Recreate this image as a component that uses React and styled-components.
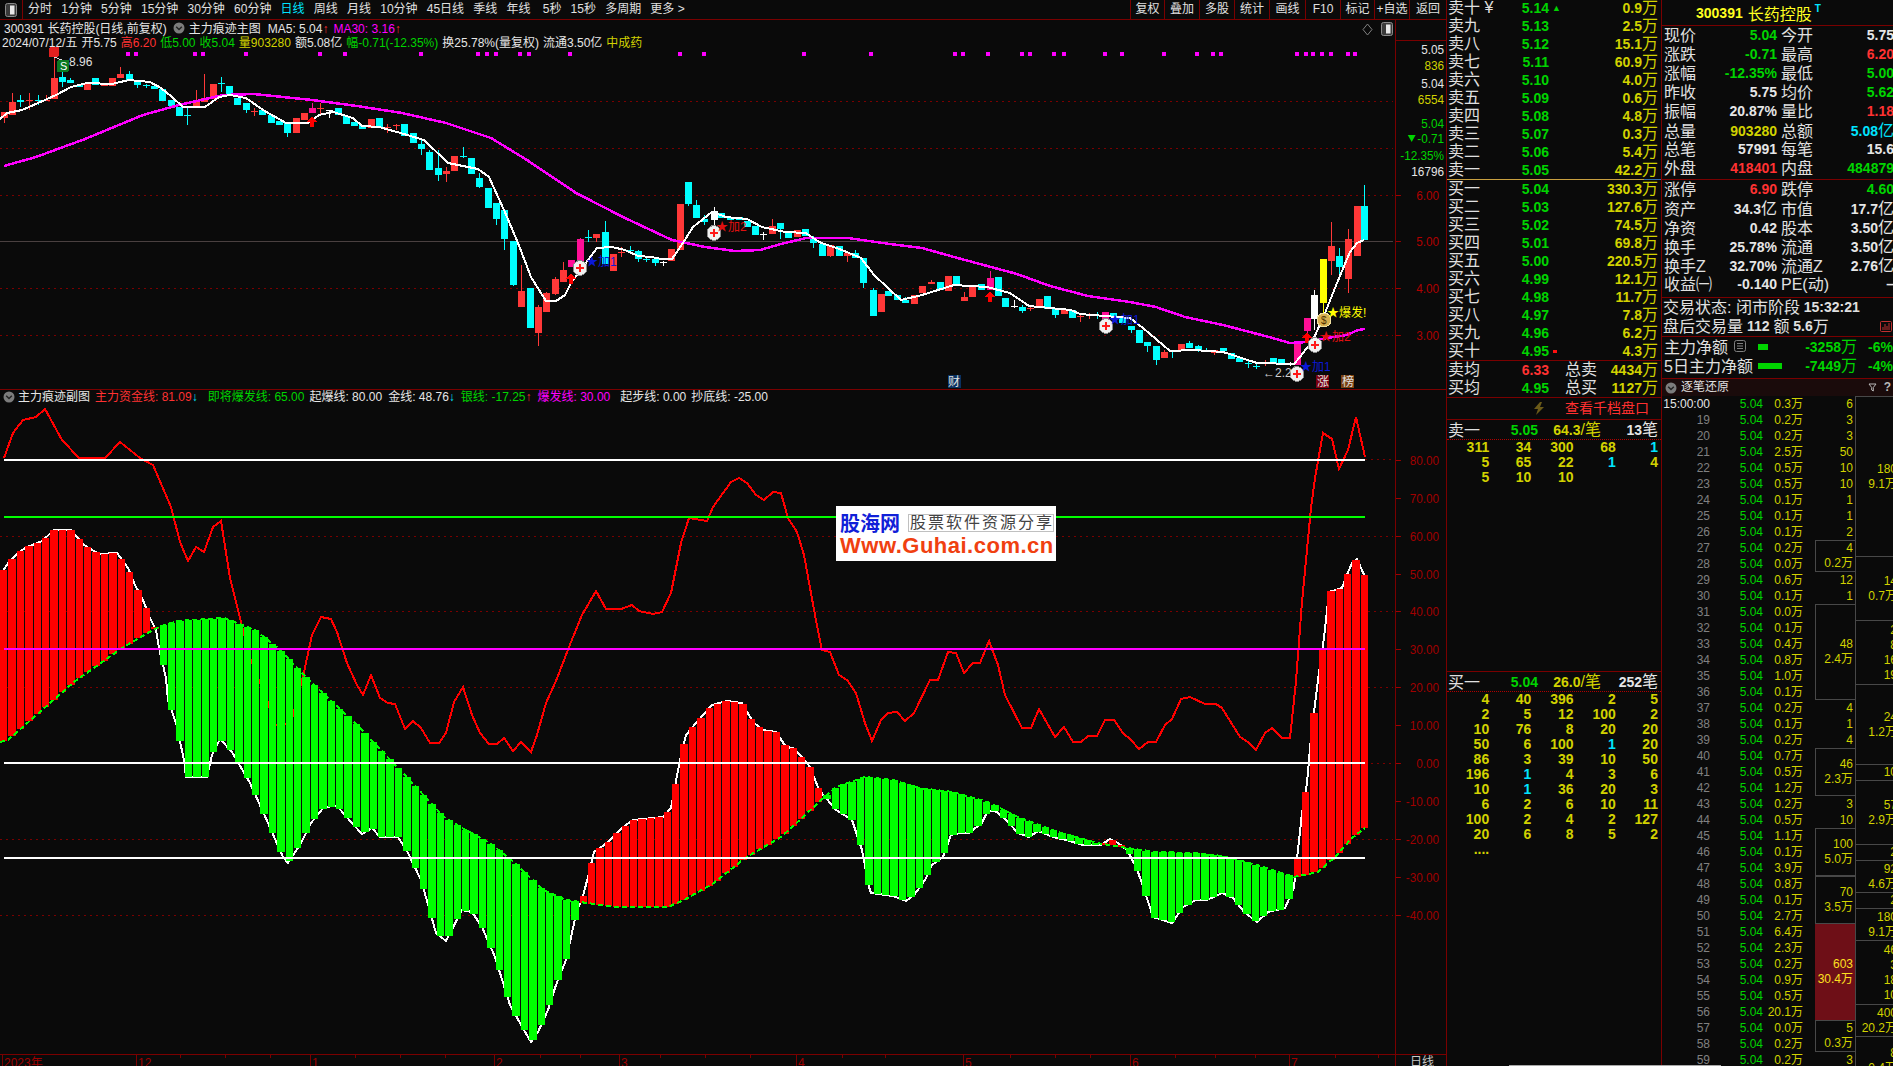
import React from "react";
import styled, { createGlobalStyle } from "styled-components";

const FONT = `"Liberation Sans", "Noto Sans CJK SC", sans-serif`;
const LINE = "#7a0000";
const C = {
	r: "#ff3232",
	g: "#00d400",
	w: "#e6e6e6",
	y: "#d2d200",
	c: "#00e4ff",
	m: "#ff00ff",
	s: "#808080",
};

/* ---------- chart data, page pixel coordinates ---------- */
const CANDLE_COLORS = { r: "#ff3838", c: "#00ffff", m: "#ff0f96", w: "#ffffff", y: "#ffff00" };
const CANDLES = [
	[4,112,118,112,123,"r"],[12,102,115,93,115,"r"],[20,100,102,95,107,"c"],[29,100,101,93,110,"r"],[38,100,101,95,105,"c"],
	[46,100,101,95,100,"r"],[54,78,99,53,99,"r"],[62,77,82,72,87,"c"],[70,80,83,78,83,"c"],[79,85,87,85,87,"c"],
	[87,84,90,84,90,"r"],[95,78,85,78,85,"c"],[104,83,86,83,86,"r"],[112,78,86,78,86,"r"],[120,74,78,67,78,"r"],
	[129,74,81,71,81,"c"],[137,81,85,81,88,"c"],[146,85,86,84,88,"c"],[154,86,89,84,89,"c"],[162,89,101,89,101,"c"],
	[171,100,106,100,106,"c"],[179,107,116,107,116,"c"],[187,115,116,107,125,"c"],[196,100,107,90,107,"r"],[204,98,102,74,102,"r"],
	[213,84,99,84,99,"r"],[221,83,84,77,92,"c"],[229,86,95,86,95,"c"],[237,98,105,98,105,"c"],[246,103,110,103,113,"c"],
	[254,111,112,108,116,"r"],[262,110,115,110,115,"c"],[271,115,123,115,123,"c"],[279,121,125,121,125,"c"],[287,123,133,123,137,"c"],
	[296,118,133,118,133,"r"],[304,113,120,113,120,"r"],[312,108,113,103,113,"m"],[320,108,109,103,116,"r"],[329,110,111,110,118,"w"],
	[338,108,115,108,115,"c"],[346,116,124,116,124,"c"],[354,122,126,122,126,"c"],[362,125,129,125,129,"c"],[371,119,128,119,128,"r"],
	[379,118,128,118,128,"c"],[387,127,128,124,133,"r"],[396,125,126,124,130,"r"],[404,124,136,124,136,"c"],[413,133,143,133,143,"c"],
	[421,144,149,140,155,"c"],[429,152,170,150,170,"c"],[438,168,175,150,181,"c"],[446,171,174,167,182,"r"],[454,156,171,156,171,"r"],
	[463,156,157,147,158,"c"],[471,158,174,158,174,"c"],[479,178,187,173,188,"c"],[488,188,208,188,208,"c"],[496,203,219,203,225,"c"],
	[504,210,239,210,250,"c"],[513,241,285,241,286,"c"],[521,291,307,265,307,"r"],[530,288,328,288,328,"c"],[538,307,333,305,346,"r"],
	[546,293,312,292,312,"r"],[555,279,294,277,295,"r"],[563,270,282,262,282,"r"],[571,260,267,260,267,"m"],[580,239,263,238,263,"m"],
	[588,237,238,230,242,"c"],[596,234,238,234,242,"r"],[605,232,264,221,264,"c"],[613,254,271,254,271,"r"],[621,252,253,247,257,"r"],
	[630,250,251,246,254,"c"],[638,251,259,250,262,"c"],[646,259,260,256,262,"c"],[655,259,263,259,266,"c"],[663,262,263,261,266,"w"],
	[671,249,261,249,261,"r"],[680,204,250,204,250,"r"],[688,182,204,182,206,"c"],[696,205,218,200,218,"c"],[704,219,222,215,225,"c"],
	[714,211,220,207,226,"w"],[721,213,218,213,218,"c"],[730,217,220,217,220,"c"],[739,217,220,217,220,"c"],[747,221,227,221,227,"c"],
	[755,226,235,226,235,"c"],[763,234,235,232,240,"w"],[772,226,234,219,234,"r"],[780,223,229,223,239,"c"],[788,233,238,233,238,"c"],
	[797,230,237,230,237,"r"],[805,229,236,229,236,"c"],[813,238,243,236,248,"c"],[822,244,256,244,256,"c"],[830,245,256,245,257,"r"],
	[839,246,256,246,256,"c"],[847,253,256,253,262,"r"],[855,253,258,250,258,"c"],[863,258,283,258,288,"c"],[873,290,316,288,316,"c"],
	[881,294,312,294,312,"r"],[888,291,296,291,296,"c"],[897,295,300,295,300,"c"],[905,300,303,297,303,"c"],[914,295,304,295,304,"r"],
	[922,286,293,286,293,"r"],[931,282,284,280,284,"r"],[940,282,290,282,290,"c"],[948,276,291,276,291,"r"],[956,276,285,276,285,"c"],
	[964,297,301,292,301,"r"],[972,287,297,287,297,"r"],[981,284,290,284,290,"c"],[990,278,290,271,290,"m"],[998,277,296,277,296,"c"],
	[1005,298,307,298,307,"c"],[1014,306,307,300,308,"w"],[1022,307,311,305,313,"c"],[1030,308,309,306,311,"r"],[1039,299,306,299,306,"r"],
	[1047,296,309,296,309,"c"],[1055,309,315,309,318,"c"],[1064,310,314,310,314,"r"],[1072,310,318,310,318,"c"],[1080,316,317,313,322,"r"],
	[1089,315,316,313,319,"r"],[1097,315,316,312,319,"c"],[1105,312,319,312,319,"m"],[1113,313,317,313,319,"c"],[1122,317,323,317,323,"c"],
	[1131,326,330,326,333,"c"],[1139,330,343,330,343,"c"],[1147,342,346,342,352,"c"],[1156,346,360,346,365,"c"],[1164,352,358,350,358,"r"],
	[1172,350,352,350,358,"c"],[1181,344,351,344,351,"r"],[1189,343,348,341,348,"c"],[1198,346,350,345,352,"c"],[1206,350,352,348,352,"c"],
	[1214,350,353,350,355,"r"],[1223,348,351,348,351,"c"],[1231,353,359,353,359,"c"],[1239,358,362,358,362,"c"],[1248,363,364,361,368,"c"],
	[1256,366,367,364,369,"c"],[1265,362,363,360,366,"r"],[1273,358,363,358,363,"c"],[1281,359,365,359,365,"c"],[1290,364,365,362,366,"w"],
	[1297,343,365,343,365,"m"],[1307,318,331,318,337,"m"],[1314,295,319,290,330,"w"],[1323,259,303,259,320,"y"],[1331,246,261,222,275,"r"],
	[1339,256,267,248,277,"c"],[1348,239,279,229,293,"r"],[1357,206,256,206,256,"r"],[1364,206,240,185,240,"c"],
];
const MA5 = [[0,119],[7,113],[22,110],[45,100],[56,95],[71,87],[87,83],[112,84],[129,80],[150,82],[161,88],[172,97],[183,107],[205,107],[219,97],[230,95],[246,98],[263,110],[286,123],[308,123],[319,115],[333,112],[353,118],[362,126],[379,127],[397,132],[424,140],[448,163],[478,169],[489,177],[504,210],[518,243],[531,277],[546,301],[556,301],[565,295],[571,283],[597,248],[612,247],[625,250],[638,256],[652,257],[661,259],[672,259],[683,243],[693,227],[712,212],[726,217],[747,219],[762,227],[785,232],[806,233],[819,242],[842,250],[861,258],[874,275],[901,300],[922,295],[954,285],[987,287],[1010,293],[1029,306],[1071,310],[1080,314],[1105,316],[1130,318],[1143,328],[1170,351],[1193,350],[1223,352],[1257,363],[1294,364],[1300,357],[1313,340],[1325,313],[1337,283],[1350,252],[1357,243],[1364,240]];
const MA30 = [[4,166],[36,157],[85,139],[143,115],[179,105],[223,95],[254,94],[312,100],[357,106],[402,113],[446,123],[491,138],[527,160],[576,193],[625,218],[672,240],[705,247],[735,251],[760,250],[781,244],[806,238],[848,238],[890,244],[922,248],[954,257],[991,267],[1017,274],[1050,286],[1088,296],[1130,302],[1156,307],[1185,317],[1223,325],[1269,337],[1290,343],[1307,342],[1327,338],[1347,335],[1358,330],[1365,329]];
const DOTS = [128,136,195,203,246,320,345,421,478,487,496,520,529,570,680,704,804,871,955,963,988,1022,1030,1054,1064,1105,1122,1164,1197,1213,1221,1297,1306,1313,1322,1331,1348,1355];

const FAST = [[0,575],[9,562],[18,553],[25,548],[42,541],[54,530],[71,530],[84,545],[99,554],[117,553],[128,568],[135,585],[143,600],[150,618],[156,630],[159,648],[166,678],[168,700],[176,723],[184,760],[186,777],[207,777],[212,755],[220,739],[232,752],[250,783],[268,823],[283,857],[288,863],[301,843],[311,823],[324,807],[337,806],[352,823],[362,834],[372,828],[380,837],[398,837],[408,853],[421,880],[429,908],[436,933],[446,941],[462,910],[472,912],[482,927],[495,957],[510,1005],[520,1023],[531,1042],[538,1032],[548,1010],[556,985],[566,960],[577,910],[582,900],[589,873],[594,852],[607,843],[622,828],[633,820],[663,817],[671,808],[679,765],[686,735],[696,723],[712,705],[727,701],[742,703],[753,722],[763,730],[776,732],[786,747],[793,748],[802,757],[810,767],[819,790],[826,798],[836,810],[852,820],[862,850],[869,887],[871,893],[893,896],[906,901],[914,895],[925,880],[932,865],[943,857],[951,835],[960,833],[969,833],[982,823],[988,810],[997,812],[1008,822],[1018,833],[1029,837],[1038,831],[1053,837],[1066,840],[1083,845],[1101,845],[1110,839],[1118,843],[1127,850],[1136,867],[1142,883],[1153,917],[1172,923],[1183,907],[1196,900],[1207,900],[1222,893],[1233,898],[1244,912],[1257,922],[1268,912],[1285,908],[1294,888],[1295,877],[1302,813],[1307,783],[1311,737],[1318,680],[1324,638],[1329,592],[1342,588],[1346,577],[1352,563],[1357,559],[1365,577]];
const SLOW = [[0,742],[8,740],[74,682],[122,648],[153,630],[161,626],[178,621],[224,618],[255,630],[278,648],[311,682],[357,725],[400,770],[444,817],[462,828],[490,843],[515,863],[543,890],[566,900],[587,903],[617,907],[668,907],[684,900],[714,883],[745,858],[781,837],[802,818],[819,802],[836,787],[865,777],[893,780],[919,788],[953,792],[988,802],[1018,817],[1058,832],[1097,843],[1127,848],[1157,852],[1196,853],[1222,856],[1257,865],[1294,877],[1318,872],[1335,857],[1352,838],[1365,828]];
const FUND = [[4,458],[13,433],[23,420],[36,417],[45,409],[62,440],[79,458],[105,458],[120,442],[140,458],[153,465],[171,507],[180,542],[188,561],[196,547],[204,552],[213,527],[221,521],[230,578],[250,658],[267,700],[275,725],[291,723],[304,672],[312,635],[321,617],[331,619],[337,632],[347,663],[357,685],[363,695],[371,675],[380,698],[388,703],[395,704],[405,729],[413,721],[421,728],[430,743],[439,743],[446,733],[454,702],[463,687],[472,715],[480,733],[489,744],[497,744],[504,738],[513,751],[521,742],[531,752],[537,735],[546,703],[556,681],[571,642],[582,615],[596,591],[606,609],[621,609],[632,605],[639,611],[653,614],[662,612],[671,593],[681,543],[689,518],[707,521],[713,507],[731,482],[739,478],[747,483],[756,495],[764,500],[773,492],[781,493],[788,518],[797,532],[804,555],[815,615],[822,650],[830,652],[839,675],[847,680],[856,693],[865,723],[872,741],[881,720],[888,713],[897,712],[905,721],[914,713],[930,680],[938,680],[948,652],[956,653],[964,673],[973,663],[980,663],[989,641],[998,665],[1005,695],[1022,728],[1031,728],[1039,709],[1055,737],[1064,727],[1073,742],[1081,742],[1088,736],[1097,736],[1105,720],[1114,720],[1123,733],[1131,740],[1139,749],[1148,742],[1156,742],[1165,725],[1172,719],[1181,699],[1190,697],[1205,704],[1216,704],[1222,708],[1240,737],[1248,742],[1256,750],[1265,733],[1272,728],[1282,738],[1290,738],[1296,681],[1302,602],[1311,508],[1315,478],[1323,433],[1332,439],[1339,469],[1348,450],[1356,417],[1365,457]];

const toPoints = pts => pts.map(p => p.join(",")).join(" ");
const yAt = (pts, x) => {
	for (let i = 1; i < pts.length; i++) {
		if (x <= pts[i][0]) {
			const [x0, y0] = pts[i - 1];
			const [x1, y1] = pts[i];
			return y0 + ((y1 - y0) * (x - x0)) / (x1 - x0 || 1);
		}
	}
	return pts[pts.length - 1][1];
};
const BARS = Array.from({ length: 163 }, (_, i) => {
	const x = 3.5 + i * 8.4;
	const fast = yAt(FAST, x);
	const slow = yAt(SLOW, x);
	const left = Math.round(x - 3.5);
	return {
		x: left,
		w: Math.round(x + 4.9) - left - 1,
		y: Math.round(Math.min(fast, slow)),
		h: Math.max(2, Math.round(Math.abs(fast - slow))),
		up: fast < slow,
	};
});
const subY = v => 763 - 3.79 * v;

/* ---------- right panels data ---------- */
const ASKS = [
	["卖十", "5.14", "0.9万"],["卖九", "5.13", "2.5万"],["卖八", "5.12", "15.1万"],["卖七", "5.11", "60.9万"],["卖六", "5.10", "4.0万"],
	["卖五", "5.09", "0.6万"],["卖四", "5.08", "4.8万"],["卖三", "5.07", "0.3万"],["卖二", "5.06", "5.4万"],["卖一", "5.05", "42.2万"],
];
const BIDS = [
	["买一", "5.04", "330.3万"],["买二", "5.03", "127.6万"],["买三", "5.02", "74.5万"],["买四", "5.01", "69.8万"],["买五", "5.00", "220.5万"],
	["买六", "4.99", "12.1万"],["买七", "4.98", "11.7万"],["买八", "4.97", "7.8万"],["买九", "4.96", "6.2万"],["买十", "4.95", "4.3万"],
];
const ASK_QUEUE = [[311,34,300,68,1],[5,65,22,1,4],[5,10,10]];
const BID_QUEUE = [[4,40,396,2,5],[2,5,12,100,2],[10,76,8,20,20],[50,6,100,1,20],[86,3,39,10,50],[196,1,4,3,6],[10,1,36,20,3],[6,2,6,10,11],[100,2,4,2,127],[20,6,8,5,2],["...."]];
const QUOTES = [
	["现价","5.04","g","今开","5.75","w"],["涨跌","-0.71","g","最高","6.20","r"],["涨幅","-12.35%","g","最低","5.00","g"],["昨收","5.75","w","均价","5.62","g"],
	["振幅","20.87%","w","量比","1.18","r"],["总量","903280","y","总额","5.08亿","c"],["总笔","57991","w","每笔","15.6","w"],["外盘","418401","r","内盘","484879","g"],
];
const FUNDAMENTALS = [
	["涨停","6.90","r","跌停","4.60","g"],["资产","34.3亿","w","市值","17.7亿","w"],["净资","0.42","w","股本","3.50亿","w"],
	["换手","25.78%","w","流通","3.50亿","w"],["换手Z","32.70%","w","流通Z","2.76亿","w"],["收益㈠","-0.140","w","PE(动)","–","w"],
];
const VOLS = ["0.3","0.2","0.2","2.5","0.5","0.5","0.1","0.1","0.1","0.2","0.0","0.6","0.1","0.0","0.1","0.4","0.8","1.0","0.1","0.2","0.1","0.2","0.7","0.5","1.2","0.2","0.5","1.1","0.1","3.9","0.8","0.1","2.7","6.4","2.3","0.2","0.9","0.5","20.1","0.0","0.2","0.2"];
// [rows, framed, lines...]
const ORDER_GROUPS = [
	[1,0,"6"],[1,0,"3"],[1,0,"3"],[1,0,"50"],[1,0,"10"],[1,0,"10"],[1,0,"1"],[1,0,"1"],[1,0,"2"],[2,1,"4","0.2万"],[1,0,"12"],[1,0,"1"],
	[6,1,"48","2.4万"],[1,0,"4"],[1,0,"1"],[1,0,"4"],[3,1,"46","2.3万"],[1,0,"3"],[1,0,"10"],[3,1,"100","5.0万"],[3,1,"70","3.5万"],[6,2,"603","30.4万"],[2,1,"5","0.3万"],[1,0,"3"],
];
const BIG_GROUPS = [
	[10,1,"180","9.1万"],[4,1,"14","0.7万"],[4,1,"2","8","16","19"],[5,1,"24","1.2万"],[1,1,"10"],[4,1,"57","2.9万"],[1,1,"2"],[2,1,"92","4.6万"],[1,1,"2"],[2,1,"180","9.1万"],[4,1,"46","3","18","10"],[2,1,"400","20.2万"],[3,1,"8","0.4万"],
];

const GlobalStyle = createGlobalStyle`
	html, body {
		margin: 0;
		background: #0a0a0a;
		overflow: hidden;
	}
	* {
		box-sizing: border-box;
	}
`;

const Page = styled.div`
	display: flex;
	width: 1893px;
	height: 1066px;
	overflow: hidden;
	background: #0a0a0a;
	color: ${C.w};
	font-family: ${FONT};
	font-size: 12px;
	white-space: nowrap;
`;

const ChartColumn = styled.div`
	display: flex;
	flex-direction: column;
	flex: 0 0 1446px;
`;

const Toolbar = styled.div`
	display: flex;
	align-items: center;
	flex: 0 0 20px;
	border-bottom: 1px solid ${LINE};
	line-height: 19px;
`;

const ToolIconBox = styled.div`
	display: flex;
	align-items: center;
	justify-content: center;
	width: 23px;
	height: 19px;
	margin-right: 5px;
	border-right: 1px solid ${LINE};
`;

const ToolLinks = styled.div`
	display: flex;
	gap: 9.2px;
`;

const ToolLink = styled.span`
	color: ${({ $active }) => ($active ? "#00e4ff" : "#e0e0e0")};
	margin-left: ${({ $pad }) => ($pad ? "3px" : "0")};
`;

const ToolCells = styled.div`
	display: flex;
	margin-left: auto;
	height: 19px;
`;

const ToolCell = styled.span`
	width: ${({ $w }) => $w}px;
	text-align: center;
	border-left: 1px solid ${LINE};
	color: #e0e0e0;
`;

const Pane = styled.div`
	display: flex;
	flex: 0 0 ${({ $h }) => $h}px;
	border-bottom: 1px solid ${LINE};
`;

const Canvas = styled.div`
	position: relative;
	flex: 0 0 1395px;
	overflow: hidden;
`;

const ChartSvg = styled.svg`
	display: block;
	width: 100%;
	height: 100%;
	shape-rendering: crispEdges;
`;

const HeaderOverlay = styled.div`
	position: absolute;
	top: ${({ $top }) => $top}px;
	left: 0;
	right: 0;
	line-height: 14px;
`;

const HeaderRow = styled.div`
	display: flex;
	align-items: center;
	gap: ${({ $gap }) => $gap || 0}px;
	height: 14px;
	padding-left: ${({ $left }) => $left || 0}px;
`;

const Text = styled.span`
	color: ${({ $c }) => C[$c] || C.w};
	margin-left: ${({ $ml }) => $ml || 0}px;
`;

const HeaderTools = styled.div`
	display: flex;
	align-items: center;
	gap: 8px;
	margin-left: auto;
	padding-right: 2px;
`;

const AxisColumn = styled.div`
	display: flex;
	flex-direction: column;
	flex: 0 0 51px;
	border-left: 1px solid ${LINE};
`;

const AxisCorner = styled.div`
	flex: 0 0 21px;
	border-bottom: 1px solid ${LINE};
`;

const AxisSvg = styled.svg`
	display: block;
	flex: 1;
	width: 100%;
	min-height: 0;
`;

const ChartText = styled.text`
	fill: ${({ $fill }) => $fill};
	font-family: ${FONT};
	font-size: ${({ $size }) => $size || 12}px;
	shape-rendering: auto;
`;

const Watermark = styled.div`
	position: absolute;
	left: 836px;
	top: 116px;
	display: grid;
	grid-template-columns: 68px 1fr;
	grid-template-rows: 22px 1fr;
	width: 220px;
	height: 55px;
	padding: 8px 4px 0;
	background: #fff;
`;

const WatermarkTitle = styled.div`
	color: #1020d8;
	font-size: 20px;
	font-weight: 700;
	line-height: 20px;
`;

const WatermarkCells = styled.div`
	display: grid;
	grid-template-columns: repeat(8, 18px);
	height: 18px;
	border: 1px solid #c0c0c0;
	color: #444;
	font-size: 16px;
	line-height: 16px;
	text-align: center;
`;

const WatermarkUrl = styled.div`
	grid-column: 1 / 3;
	color: #f04010;
	font-size: 22px;
	font-weight: 700;
	line-height: 20px;
	letter-spacing: 0.5px;
`;

const DateBar = styled.div`
	display: flex;
	flex: 1;
	min-height: 0;
`;

const DateCanvas = styled.div`
	flex: 0 0 1395px;
	overflow: hidden;
`;

const DateSide = styled.div`
	flex: 0 0 51px;
	border-left: 1px solid ${LINE};
	padding-left: 14px;
	color: #c8c8c8;
	line-height: 14px;
`;

const OrderPanel = styled.div`
	display: flex;
	flex-direction: column;
	flex: 0 0 216px;
	height: 1066px;
	border-left: 1px solid ${LINE};
	border-right: 1px solid ${LINE};
	overflow: hidden;
`;

const AskBook = styled.div`
	flex: 0 0 180px;
	margin-top: -1px;
`;

const Split = styled.div`
	flex: 0 0 1px;
	background: linear-gradient(90deg, #c8a040 0 92%, #3070b0 92%);
`;

const BidBook = styled.div`
	flex: 0 0 181px;
	border-bottom: 1px solid ${LINE};
`;

const OrderRow = styled.div`
	display: grid;
	grid-template-columns: 32px 69px 12px 1fr;
	align-items: center;
	height: 18px;
	padding: 0 3px 0 1px;
	font-size: 14px;
	font-weight: 700;
	line-height: 18px;
`;

const Label = styled.span`
	color: #e0e0e0;
	font-size: 16px;
	font-weight: 400;
`;

const Cell = styled.span`
	color: ${({ $c }) => C[$c] || C.w};
	text-align: right;
`;

const Unit = styled.span`
	font-size: ${({ $size }) => $size || 16}px;
	font-weight: 400;
`;

const MarkerUp = styled.span`
	color: ${C.g};
	font-size: 9px;
	padding-left: 3px;
`;

const MarkerSquare = styled.i`
	display: block;
	width: 4px;
	height: 3px;
	margin-left: 4px;
	background: #ff1010;
`;

const AverageBook = styled.div`
	flex: 0 0 37px;
	border-bottom: 1px solid ${LINE};
`;

const AverageRow = styled(OrderRow)`
	grid-template-columns: 32px 69px 16px 32px 1fr;
`;

const DepthLink = styled.div`
	display: flex;
	align-items: center;
	flex: 0 0 22px;
	gap: 20px;
	height: 22px;
	min-height: 0;
	padding-left: 86px;
	border-bottom: 1px solid ${LINE};
	color: #ff3030;
	font-size: 14px;
	line-height: 21px;
`;

const QueueHeader = styled.div`
	display: grid;
	grid-template-columns: 32px 58px 63px 1fr;
	align-items: center;
	flex: 0 0 20px;
	height: 20px;
	min-height: 0;
	padding: 0 3px 0 1px;
	border-bottom: 1px dotted #b00000;
	font-size: 14px;
	font-weight: 700;
	line-height: 19px;
`;

const QueueBody = styled.div`
	flex: 0 0 ${({ $h }) => $h}px;
	${({ $ruled }) => $ruled && `border-bottom: 1px solid ${LINE};`}
`;

const QueueRow = styled.div`
	display: grid;
	grid-template-columns: repeat(5, 42.2px);
	height: 15px;
	font-size: 14px;
	font-weight: 700;
	line-height: 15px;
`;

const SidePanel = styled.div`
	display: flex;
	flex-direction: column;
	flex: 0 0 231px;
	height: 1066px;
	overflow: hidden;
`;

const SideTitle = styled.div`
	display: flex;
	align-items: center;
	flex: 0 0 26px;
	padding-left: 34px;
	border-bottom: 1px solid ${LINE};
	color: #ffff20;
	font-size: 14px;
	font-weight: 700;
`;

const TitleName = styled.span`
	margin-left: 5px;
	font-size: 16px;
	font-weight: 400;
`;

const TitleTag = styled.sup`
	margin: -8px 0 0 3px;
	color: #00e4ff;
	font-size: 10px;
`;

const QuoteBlock = styled.div`
	flex: 0 0 ${({ $h }) => $h}px;
	border-bottom: 1px solid ${LINE};
`;

const QuoteRow = styled.div`
	display: grid;
	grid-template-columns: 34px 79px 40px 77px;
	align-items: center;
	width: 232px;
	height: 19px;
	padding-left: 2px;
	font-size: 14px;
	font-weight: 700;
	line-height: 19px;
`;

const QuoteLabel = styled(Label)`
	padding-left: ${({ $pad }) => ($pad ? "4px" : "0")};
`;

const StatusRow = styled.div`
	display: flex;
	align-items: center;
	height: 19px;
	padding-left: 1px;
	color: #e0e0e0;
	font-size: 14px;
	font-weight: 700;
	line-height: 19px;
`;

const StatusIcon = styled.svg`
	margin-left: auto;
	margin-right: 1px;
`;

const FlowRow = styled.div`
	display: grid;
	grid-template-columns: 70px 24px 46px 53px 36px;
	align-items: center;
	height: 19px;
	padding-left: 2px;
	font-size: 14px;
	font-weight: 700;
	line-height: 19px;
`;

const FlowBar = styled.i`
	display: block;
	width: ${({ $w }) => $w}px;
	height: 6px;
	background: #00d400;
`;

const TickHeader = styled.div`
	display: flex;
	align-items: center;
	gap: 4px;
	flex: 0 0 17px;
	padding: 0 2px 0 3px;
	background: #1a0b0b;
	color: #e0e0e0;
	line-height: 17px;
`;

const TickTools = styled.div`
	display: flex;
	align-items: center;
	gap: 7px;
	margin-left: auto;
	color: #b8b8b8;
	font-weight: 700;
`;

const TickArea = styled.div`
	display: flex;
	flex: 1;
	min-height: 0;
`;

const TickList = styled.div`
	flex: 0 0 153px;
`;

const TickRow = styled.div`
	display: grid;
	grid-template-columns: 48px 53px 40px;
	height: 16px;
	line-height: 16px;
`;

const GroupColumn = styled.div`
	flex: 0 0 ${({ $w }) => $w}px;
	${({ $ruled }) => $ruled && `border-left: 1px solid #484848;`}
`;

const Group = styled.div`
	display: flex;
	flex-direction: column;
	align-items: flex-end;
	justify-content: center;
	height: ${({ $rows }) => $rows * 16}px;
	padding-right: 2px;
	color: ${({ $kind }) => ($kind === 2 ? "#ffe020" : C.y)};
	line-height: 15px;
	background: ${({ $kind }) => ($kind === 2 ? "#6e0f17" : "transparent")};
	${({ $kind, $edge }) =>
		$kind === 1 &&
		`border: 1px solid #484848; border-width: 1px 0 ${$edge ? "0" : "1px"} ${$edge ? "0" : "1px"};`}
`;

const BigValue = styled.span`
	margin-right: -4px;
`;

const WindowEdge = styled.div`
	position: absolute;
	left: 1509px;
	bottom: 0;
	width: 212px;
	height: 1px;
	background: #a8a8a8;
`;

const Root = styled.div`
	position: relative;
`;

const Amount = ({ value, size }) => {
	const m = String(value).match(/^(.*?)([万亿])$/);
	if (!m) return value;
	return (
		<>
			{m[1]}
			<Unit $size={size}>{m[2]}</Unit>
		</>
	);
};

const CircleChevron = () => (
	<svg width="12" height="12" viewBox="0 0 12 12">
		<circle cx="6" cy="6" r="5.5" fill="#7c7c7c" />
		<path d="M3.2 4.8 6 7.6l2.8-2.8" fill="none" stroke="#222" strokeWidth="1.4" />
	</svg>
);

const PanelToggle = () => (
	<svg width="12" height="14" viewBox="0 0 12 14">
		<rect x="0.5" y="0.5" width="11" height="13" rx="2" fill="#3a3a3a" stroke="#8a8a8a" />
		<rect x="5" y="2.5" width="4.5" height="9" fill="#e8e8e8" />
	</svg>
);

const Diamond = () => (
	<svg width="11" height="13" viewBox="0 0 11 13">
		<path d="M5.5 1 10 6.5 5.5 12 1 6.5Z" fill="none" stroke="#808080" />
	</svg>
);

const Bolt = () => (
	<svg width="12" height="13" viewBox="0 0 12 13">
		<path d="M7 0 1 7h4l-2 6 8-8H7l2-5Z" fill="#6b5a18" />
	</svg>
);

const PlusMark = ({ x, y }) => (
	<g>
		<ellipse cx={x} cy={y} rx="7" ry="7.5" fill="#f0f0f0" stroke="#8a8a8a" />
		<path d={`M${x - 4} ${y - 1}h8v2h-8zM${x - 1} ${y - 4}h2v8h-2z`} fill="#ff1818" />
	</g>
);

const UpArrow = ({ x, y, h = 11 }) => (
	<path d={`M${x} ${y}l5 6h-3v${h - 6}h-4v-${h - 6}h-3z`} fill="#ff0000" />
);

const MainChart = () => (
	<ChartSvg viewBox="0 20 1395 369" preserveAspectRatio="none">
		{[101, 148, 195, 288, 335].map(y => (
			<line key={y} x1="0" x2="1393" y1={y + 0.5} y2={y + 0.5} stroke="#7a0000" strokeDasharray="2 4" />
		))}
		<line x1="0" x2="1393" y1="241.5" y2="241.5" stroke="#4a4040" />
		{DOTS.map(x => (
			<rect key={x} x={x - 2} y="52" width="4" height="4" fill="#ff00ff" />
		))}
		{CANDLES.map(([x, top, bottom, hi, lo, c]) => (
			<g key={x} fill={CANDLE_COLORS[c]}>
				<rect x={x} y={hi} width="1" height={lo - hi} />
				<rect x={x - 3.5} y={top} width="7" height={bottom - top} />
			</g>
		))}
		<polyline points={toPoints(MA30)} fill="none" stroke="#ff00ff" strokeWidth="2.5" />
		<polyline points={toPoints(MA5)} fill="none" stroke="#fff" strokeWidth="2" />

		<rect x="49" y="47" width="10" height="10" rx="2" fill="#e02020" />
		<path d="M54 57l8 3" stroke="#ddd" fill="none" />
		<rect x="57" y="60" width="12" height="12" rx="2" fill="#0a7a20" />
		<ChartText x="60" y="70" $fill="#fff" $size={11}>S</ChartText>
		<ChartText x="69" y="66" $fill="#e0e0e0">8.96</ChartText>

		<UpArrow x={312} y={116} />
		<UpArrow x={571} y={273} />
		<UpArrow x={990} y={291} />
		<UpArrow x={1307} y={332} />
		<PlusMark x={580} y={268} />
		<PlusMark x={714} y={233} />
		<PlusMark x={1106} y={326} />
		<PlusMark x={1315} y={345} />
		<PlusMark x={1297} y={374} />

		<ChartText x="586" y="266" $fill="#0a18d8">★加1</ChartText>
		<ChartText x="716" y="231" $fill="#e01010">★加2</ChartText>
		<ChartText x="1109" y="324" $fill="#0a18d8">★加1</ChartText>
		<ChartText x="1300" y="371" $fill="#0a18d8">★加1</ChartText>
		<ChartText x="1320" y="341" $fill="#e01010">★加2</ChartText>
		<ChartText x="1263" y="377" $fill="#d0d0d0">←2.2</ChartText>

		<circle cx="1324" cy="320" r="7" fill="#d8b050" stroke="#f0e0a0" />
		<ChartText x="1321" y="324" $fill="#503000" $size={10}>$</ChartText>
		<ChartText x="1327" y="317" $fill="#ffff00">★爆发!</ChartText>

		<rect x="948" y="375" width="13" height="13" fill="#0a3060" />
		<ChartText x="948" y="386" $fill="#e0e0e0">财</ChartText>
		<rect x="1316" y="375" width="13" height="13" fill="#7a0010" />
		<ChartText x="1317" y="386" $fill="#e0e0e0">涨</ChartText>
		<rect x="1341" y="375" width="13" height="13" fill="#7a4010" />
		<ChartText x="1342" y="386" $fill="#e0e0e0">榜</ChartText>
	</ChartSvg>
);

const SubChart = () => (
	<ChartSvg viewBox="0 390 1395 664" preserveAspectRatio="none">
		{[60, 40, 20, -20, -40].map(v => (
			<line key={v} x1="0" x2="1393" y1={Math.round(subY(v)) + 0.5} y2={Math.round(subY(v)) + 0.5} stroke="#7a0000" strokeDasharray="2 4" />
		))}
		{[80, 0].map(v => (
			<line key={v} x1="1365" x2="1393" y1={subY(v)} y2={subY(v)} stroke="#7a0000" strokeDasharray="2 4" />
		))}
		<polyline points={toPoints(FUND)} fill="none" stroke="#ff0000" strokeWidth="2" />
		<polyline points={toPoints(FAST)} fill="none" stroke="#fff" strokeWidth="2" />
		{BARS.map(b => (
			<rect key={b.x} x={b.x} y={b.y} width={b.w} height={b.h} fill={b.up ? "#ff0000" : "#00ff00"} />
		))}
		<polyline points={toPoints(SLOW)} fill="none" stroke="#00ff00" strokeWidth="2" strokeDasharray="5 3" />
		{[[80, "#fff"], [65, "#00ff00"], [30, "#ff00ff"], [0, "#fff"], [-25, "#fff"]].map(([v, c]) => (
			<rect key={v} x="4" y={Math.round(subY(v)) - 1} width="1361" height="2" fill={c} />
		))}
	</ChartSvg>
);

const MainAxis = () => (
	<AxisSvg viewBox="1395 41 51 348" preserveAspectRatio="none">
		{[["5.05", 54, C.w], ["836", 70, C.y], ["5.04", 88, C.w], ["6554", 104, C.y], ["5.04", 128, C.g], ["-0.71", 143, C.g], ["-12.35%", 160, C.g], ["16796", 176, C.w]].map(([t, y, c]) => (
			<ChartText key={y} x="1444" y={y} textAnchor="end" $fill={c}>{t}</ChartText>
		))}
		<path d="M1407 135h8l-4 7z" fill={C.g} />
		{[["6.00", 195], ["5.00", 241], ["4.00", 288], ["3.00", 335]].map(([t, y]) => (
			<g key={y}>
				<rect x="1395" y={y} width="5" height="1" fill="#a00000" />
				<ChartText x="1439" y={y + 5} textAnchor="end" $fill="#b00000">{t}</ChartText>
			</g>
		))}
	</AxisSvg>
);

const SubAxis = () => (
	<AxisSvg viewBox="1395 390 51 664" preserveAspectRatio="none">
		{[80, 70, 60, 50, 40, 30, 20, 10, 0, -10, -20, -30, -40].map(v => (
			<g key={v}>
				<rect x="1395" y={Math.round(subY(v))} width="5" height="1" fill="#a00000" />
				<ChartText x="1439" y={Math.round(subY(v)) + 5} textAnchor="end" $fill="#a00000">{v.toFixed(2)}</ChartText>
			</g>
		))}
	</AxisSvg>
);

const DateAxis = () => (
	<ChartSvg viewBox="0 1055 1395 11" preserveAspectRatio="none">
		{[180, 225, 270, 355, 400, 445, 540, 580, 660, 705, 750, 842, 885, 1010, 1055, 1090, 1175, 1215, 1255, 1335, 1378].map(x => (
			<rect key={x} x={x} y="1055" width="1" height="3" fill="#7a0000" />
		))}
		{[[2, "2023年"], [136, "12"], [310, "1"], [494, "2"], [619, "3"], [796, "4"], [963, "5"], [1130, "6"], [1289, "7"]].map(([x, t]) => (
			<g key={x}>
				<rect x={x} y="1055" width="1" height="11" fill="#7a0000" />
				<ChartText x={x + 2} y="1067" $fill="#a00000">{t}</ChartText>
			</g>
		))}
	</ChartSvg>
);

const QuoteRows = ({ rows }) =>
	rows.map(([a, b, bc, d, e, ec]) => (
		<QuoteRow key={a}>
			<QuoteLabel>{a}</QuoteLabel>
			<Cell $c={bc}><Amount value={b} /></Cell>
			<QuoteLabel $pad>{d}</QuoteLabel>
			<Cell $c={ec}><Amount value={e} /></Cell>
		</QuoteRow>
	));

const App = () => (
	<Root>
		<GlobalStyle />
		<Page>
			<ChartColumn>
				<Toolbar>
					<ToolIconBox><PanelToggle /></ToolIconBox>
					<ToolLinks>
						{["分时", "1分钟", "5分钟", "15分钟", "30分钟", "60分钟", "日线", "周线", "月线", "10分钟", "45日线", "季线", "年线", "5秒", "15秒", "多周期", "更多 >"].map(t => (
							<ToolLink key={t} $active={t === "日线"} $pad={t === "5秒"}>{t}</ToolLink>
						))}
					</ToolLinks>
					<ToolCells>
						{[["复权", 34], ["叠加", 35], ["多股", 35], ["统计", 35], ["画线", 36], ["F10", 35], ["标记", 34], ["+自选", 35], ["返回", 37]].map(([t, w]) => (
							<ToolCell key={t} $w={w}>{t}</ToolCell>
						))}
					</ToolCells>
				</Toolbar>

				<Pane $h={370}>
					<Canvas>
						<MainChart />
						<HeaderOverlay $top={2}>
							<HeaderRow $left={4}>
								<Text>300391 长药控股(日线,前复权)</Text>
								<Text $ml={6}><CircleChevron /></Text>
								<Text $ml={4}>主力痕迹主图</Text>
								<Text $ml={7}>MA5: 5.04</Text>
								<Text $c="r">↑</Text>
								<Text $ml={5} $c="m">MA30: 3.16</Text>
								<Text $c="r">↑</Text>
								<HeaderTools><Diamond /><PanelToggle /></HeaderTools>
							</HeaderRow>
							<HeaderRow $left={2} $gap={4}>
								<Text>2024/07/12/五</Text>
								<Text>开5.75</Text>
								<Text $c="r">高6.20</Text>
								<Text $c="g">低5.00</Text>
								<Text $c="g">收5.04</Text>
								<Text $c="y">量903280</Text>
								<Text>额5.08亿</Text>
								<Text $c="g">幅-0.71(-12.35%)</Text>
								<Text>换25.78%(量复权)</Text>
								<Text>流通3.50亿</Text>
								<Text $c="y">中成药</Text>
							</HeaderRow>
						</HeaderOverlay>
					</Canvas>
					<AxisColumn>
						<AxisCorner />
						<MainAxis />
					</AxisColumn>
				</Pane>

				<Pane $h={665}>
					<Canvas>
						<SubChart />
						<HeaderOverlay $top={0}>
							<HeaderRow $left={3}>
								<CircleChevron />
								<Text $ml={3}>主力痕迹副图</Text>
								<Text $ml={5} $c="r">主力资金线: 81.09</Text>
								<Text $c="c">↓</Text>
								<Text $ml={10} $c="g">即将爆发线: 65.00</Text>
								<Text $ml={5}>起爆线: 80.00</Text>
								<Text $ml={6}>金线: 48.76</Text>
								<Text $c="c">↓</Text>
								<Text $ml={6} $c="g">银线: -17.25</Text>
								<Text $c="r">↑</Text>
								<Text $ml={6} $c="m">爆发线: 30.00</Text>
								<Text $ml={10}>起步线: 0.00</Text>
								<Text $ml={5}>抄底线: -25.00</Text>
							</HeaderRow>
						</HeaderOverlay>
						<Watermark>
							<WatermarkTitle>股海网</WatermarkTitle>
							<WatermarkCells>
								{"股票软件资源分享".split("").map(t => <span key={t}>{t}</span>)}
							</WatermarkCells>
							<WatermarkUrl>Www.Guhai.com.cn</WatermarkUrl>
						</Watermark>
					</Canvas>
					<AxisColumn>
						<SubAxis />
					</AxisColumn>
				</Pane>

				<DateBar>
					<DateCanvas><DateAxis /></DateCanvas>
					<DateSide>日线</DateSide>
				</DateBar>
			</ChartColumn>

			<OrderPanel>
				<AskBook>
					{ASKS.map(([name, price, vol], i) => (
						<OrderRow key={name}>
							<Label>{name}{i === 0 ? " ¥" : ""}</Label>
							<Cell $c="g">{price}</Cell>
							{i === 0 ? <MarkerUp>▲</MarkerUp> : <span />}
							<Cell $c="y"><Amount value={vol} /></Cell>
						</OrderRow>
					))}
				</AskBook>
				<Split />
				<BidBook>
					{BIDS.map(([name, price, vol], i) => (
						<OrderRow key={name}>
							<Label>{name}</Label>
							<Cell $c="g">{price}</Cell>
							{i === 9 ? <MarkerSquare /> : <span />}
							<Cell $c="y"><Amount value={vol} /></Cell>
						</OrderRow>
					))}
				</BidBook>
				<AverageBook>
					<AverageRow>
						<Label>卖均</Label>
						<Cell $c="r">6.33</Cell>
						<span />
						<Label>总卖</Label>
						<Cell $c="y"><Amount value="4434万" /></Cell>
					</AverageRow>
					<AverageRow>
						<Label>买均</Label>
						<Cell $c="g">4.95</Cell>
						<span />
						<Label>总买</Label>
						<Cell $c="y"><Amount value="1127万" /></Cell>
					</AverageRow>
				</AverageBook>
				<DepthLink><Bolt />查看千档盘口</DepthLink>
				<QueueHeader>
					<Label>卖一</Label>
					<Cell $c="g">5.05</Cell>
					<Cell $c="y">64.3<Unit>/笔</Unit></Cell>
					<Cell>13<Unit>笔</Unit></Cell>
				</QueueHeader>
				<QueueBody $h={232} $ruled>
					{ASK_QUEUE.map((row, i) => (
						<QueueRow key={i}>
							{row.map((n, j) => <Cell key={j} $c={n === 1 ? "c" : "y"}>{n}</Cell>)}
						</QueueRow>
					))}
				</QueueBody>
				<QueueHeader>
					<Label>买一</Label>
					<Cell $c="g">5.04</Cell>
					<Cell $c="y">26.0<Unit>/笔</Unit></Cell>
					<Cell>252<Unit>笔</Unit></Cell>
				</QueueHeader>
				<QueueBody $h={180}>
					{BID_QUEUE.map((row, i) => (
						<QueueRow key={i}>
							{row.map((n, j) => <Cell key={j} $c={n === 1 ? "c" : "y"}>{n}</Cell>)}
						</QueueRow>
					))}
				</QueueBody>
			</OrderPanel>

			<SidePanel>
				<SideTitle>
					300391<TitleName>长药控股</TitleName><TitleTag>T</TitleTag>
				</SideTitle>
				<QuoteBlock $h={154}><QuoteRows rows={QUOTES} /></QuoteBlock>
				<QuoteBlock $h={118}><QuoteRows rows={FUNDAMENTALS} /></QuoteBlock>
				<QuoteBlock $h={39}>
					<StatusRow><Label>交易状态: 闭市阶段</Label>&nbsp;15:32:21</StatusRow>
					<StatusRow>
						<Label>盘后交易量</Label>&nbsp;112&nbsp;<Label>额</Label>&nbsp;5.6<Label>万</Label>
						<StatusIcon width="12" height="11" viewBox="0 0 12 11">
							<rect x="0.5" y="0.5" width="11" height="10" rx="1" fill="none" stroke="#c03030" />
							<path d="M3 9V6M5 9V3M7 9V5M9 9V2" stroke="#c03030" />
						</StatusIcon>
					</StatusRow>
				</QuoteBlock>
				<QuoteBlock $h={42}>
					{[["主力净额", 10, "-3258", "-6%", true], ["5日主力净额", 24, "-7449", "-4%", false]].map(([name, w, v, p, icon]) => (
						<FlowRow key={name}>
							<Label>{name}</Label>
							<span>
								{icon && (
									<svg width="12" height="12" viewBox="0 0 12 12">
										<rect x="0.5" y="0.5" width="11" height="11" rx="2" fill="none" stroke="#808080" />
										<path d="M3 3.5h6M3 6h6M3 8.5h6" stroke="#808080" />
									</svg>
								)}
							</span>
							<FlowBar $w={w} />
							<Cell $c="g"><Amount value={`${v}万`} /></Cell>
							<Cell $c="g">{p}</Cell>
						</FlowRow>
					))}
				</QuoteBlock>
				<TickHeader>
					<CircleChevron />
					<span>逐笔还原</span>
					<TickTools>
						<svg width="9" height="9" viewBox="0 0 9 9">
							<path d="M1 1h7L5.3 4.5V8L3.7 7V4.5Z" fill="none" stroke="#b8b8b8" />
						</svg>
						<span>?</span>
					</TickTools>
				</TickHeader>
				<TickArea>
					<TickList>
						{VOLS.map((v, i) => (
							<TickRow key={i}>
								<Cell $c={i === 0 ? "w" : "s"}>{i === 0 ? "15:00:00" : 18 + i}</Cell>
								<Cell $c="g">5.04</Cell>
								<Cell $c="y"><Amount value={`${v}万`} size={12} /></Cell>
							</TickRow>
						))}
					</TickList>
					<GroupColumn $w={40}>
						{ORDER_GROUPS.map(([rows, kind, ...lines], i) => (
							<Group key={i} $rows={rows} $kind={kind}>
								{lines.map(l => <span key={l}><Amount value={l} size={12} /></span>)}
							</Group>
						))}
					</GroupColumn>
					<GroupColumn $w={40} $ruled>
						{BIG_GROUPS.map(([rows, kind, ...lines], i) => (
							<Group key={i} $rows={rows} $kind={kind} $edge>
								{lines.map(l => <BigValue key={l}><Amount value={l} size={12} /></BigValue>)}
							</Group>
						))}
					</GroupColumn>
				</TickArea>
			</SidePanel>
			<WindowEdge />
		</Page>
	</Root>
);

export default App;
